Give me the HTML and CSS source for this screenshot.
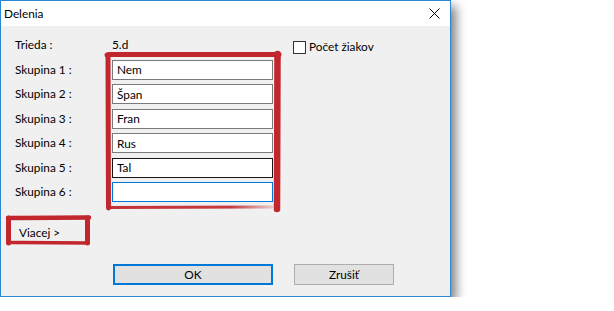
FILE: index.html
```html
<!DOCTYPE html>
<html lang="sk">
<head>
    <meta charset="UTF-8">
    <link rel="stylesheet" href="styles.css">
</head>
<body>
    <div class="window">
        <!-- Title bar -->
        <div class="titlebar">
            <span class="title">Delenia</span>
            <svg class="close" width="11" height="11" viewBox="0 0 11 11">
                <path d="M0.5 0.5 L10.5 10.5 M10.5 0.5 L0.5 10.5" stroke="#000" stroke-width="1" fill="none"/>
            </svg>
        </div>

        <div class="content">
            <div class="groups">
                <span class="label">Trieda :</span>
                <span class="value">5.d</span>
                <label class="check"><span class="box"></span>Počet žiakov</label>

                <span class="label">Skupina 1 :</span>
                <input class="field" type="text" value="Nem">
                <span class="label">Skupina 2 :</span>
                <input class="field" type="text" value="Špan">
                <span class="label">Skupina 3 :</span>
                <input class="field" type="text" value="Fran">
                <span class="label">Skupina 4 :</span>
                <input class="field" type="text" value="Rus">
                <span class="label">Skupina 5 :</span>
                <input class="field hover" type="text" value="Tal">
                <span class="label">Skupina 6 :</span>
                <input class="field focus" type="text" value="">
            </div>

            <div class="more">Viacej &gt;</div>

            <div class="buttons">
                <button class="btn default" type="button">OK</button>
                <button class="btn" type="button">Zrušiť</button>
            </div>
        </div>

        <!-- Red marker annotations -->
        <svg class="marks" width="451" height="297" viewBox="0 0 451 297">
            <defs>
                <linearGradient id="fade" x1="0" x2="1" y1="0" y2="0">
                    <stop offset="0" stop-color="#c1272d" stop-opacity="0.95"/>
                    <stop offset="0.75" stop-color="#c1272d" stop-opacity="0.9"/>
                    <stop offset="1" stop-color="#c1272d" stop-opacity="0.2"/>
                </linearGradient>
            </defs>
            <g fill="none" stroke="#c1272d" stroke-linecap="round" stroke-linejoin="round">
                <path d="M107 55 Q107 54.5 110 54.5 L279 54.5" stroke-width="5"/>
                <path d="M108 55 L108.5 208" stroke-width="5"/>
                <path d="M108 207.5 L272 207" stroke="url(#fade)" stroke-width="3"/>
                <path d="M277.5 54 L277 209" stroke-width="6.5"/>

                <path d="M8 218 L89 217.5" stroke-width="4.5"/>
                <path d="M8.5 218 L8.5 243" stroke-width="5"/>
                <path d="M9 242.5 L88 243" stroke-width="3.5"/>
                <path d="M87.5 218 L87.5 243" stroke-width="5"/>
            </g>
        </svg>
    </div>
</body>
</html>
```

FILE: styles.css
```css
body {
    margin: 0;
    background: #fff;
    font-family: Lato, "Noto Sans", sans-serif;
    font-size: 11.8px;
    color: #000;
}

.window {
    position: relative;
    width: 449px;
    height: 295px;
    border: 1px solid #2b85d4;
    background: #f0f0f0;
    box-shadow: 5px 6px 10px rgba(0, 0, 0, 0.5);
}

.titlebar {
    height: 25px;
    background: #fff;
    display: flex;
    align-items: center;
    justify-content: space-between;
    padding: 0 10px 0 3px;
}

.title {
    line-height: 16px;
}

.close {
    display: block;
    margin-top: -1px;
}

.content {
    padding: 8px 0 0 14px;
}

.groups {
    display: grid;
    grid-template-columns: 97px 161px auto;
    grid-template-rows: 21.6px repeat(6, 20px);
    row-gap: 4.4px;
    align-items: center;
}

.label {
    grid-column: 1 / 2;
    line-height: 16px;
}

.value {
    grid-column: 2 / 3;
    line-height: 16px;
}

.check {
    grid-column: 3 / 4;
    grid-row: 1 / 2;
    align-self: start;
    margin: 6px 0 0 20px;
    display: flex;
    align-items: center;
    line-height: 14px;
}

.box {
    width: 11px;
    height: 11px;
    border: 1px solid #333;
    background: #fff;
    margin-right: 3px;
}

.field {
    grid-column: 2 / 3;
    box-sizing: border-box;
    width: 161px;
    height: 20px;
    margin: 0;
    padding: 0 4px;
    border: 1px solid #7a7a7a;
    background: #fff;
    font-family: inherit;
    font-size: 11.8px;
    color: #000;
    outline: none;
}

.field.hover {
    border-color: #171717;
}

.field.focus {
    border-color: #0078d7;
}

.more {
    margin: 23px 0 0 4px;
    line-height: 16px;
}

.buttons {
    display: flex;
    gap: 21px;
    margin: 23px 0 0 98px;
}

.btn {
    box-sizing: border-box;
    width: 100px;
    height: 21px;
    margin: 0;
    padding: 0;
    border: 1px solid #adadad;
    background: #e1e1e1;
    font-family: inherit;
    font-size: 11.8px;
    color: #000;
}

.btn.default {
    width: 160px;
    border: 2px solid #0078d7;
}

.marks {
    position: absolute;
    left: -1px;
    top: -1px;
    pointer-events: none;
}
```
